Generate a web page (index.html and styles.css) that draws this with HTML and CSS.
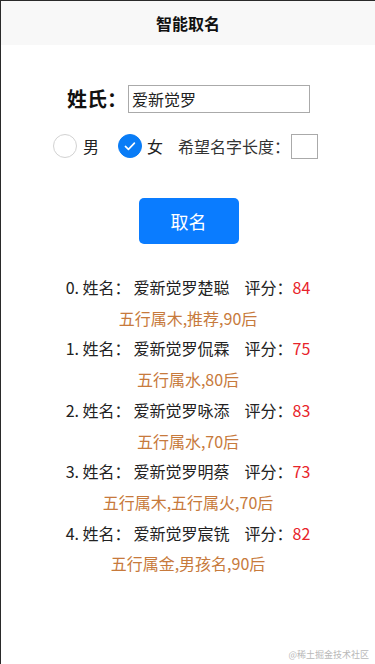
FILE: index.html
```html
<!DOCTYPE html>
<html lang="zh">
<head>
<meta charset="utf-8">
<link rel="stylesheet" href="styles.css">
</head>
<body>
<div class="page">
  <header class="bar">智能取名</header>
  <div class="surname">
    <span class="label">姓氏：</span>
    <div class="input">爱新觉罗</div>
  </div>
  <div class="opts">
    <span class="radio"></span><span class="opt">男</span>
    <span class="radio on"><svg viewBox="0 0 24 24" width="24" height="24"><path d="M7 12.5l3.3 3.2 6.5-6.8" fill="none" stroke="#fff" stroke-width="1.8" stroke-linecap="round" stroke-linejoin="round"/></svg></span><span class="opt">女</span>
    <span class="lenlabel">希望名字长度：</span><span class="lenbox"></span>
  </div>
  <div class="btnwrap"><div class="btn">取名</div></div>
  <div class="results">
    <div class="row"><span>0. 姓名：</span><span class="nm">爱新觉罗楚聪</span><span class="sc">评分：</span><span class="score">84</span></div>
    <div class="desc">五行属木,推荐,90后</div>
    <div class="row"><span>1. 姓名：</span><span class="nm">爱新觉罗侃霖</span><span class="sc">评分：</span><span class="score">75</span></div>
    <div class="desc">五行属水,80后</div>
    <div class="row"><span>2. 姓名：</span><span class="nm">爱新觉罗咏添</span><span class="sc">评分：</span><span class="score">83</span></div>
    <div class="desc">五行属水,70后</div>
    <div class="row"><span>3. 姓名：</span><span class="nm">爱新觉罗明蔡</span><span class="sc">评分：</span><span class="score">73</span></div>
    <div class="desc">五行属木,五行属火,70后</div>
    <div class="row"><span>4. 姓名：</span><span class="nm">爱新觉罗宸铣</span><span class="sc">评分：</span><span class="score">82</span></div>
    <div class="desc">五行属金,男孩名,90后</div>
  </div>
  <div class="wm">@稀土掘金技术社区</div>
</div>
</body>
</html>
```
FILE: styles.css
```css
html, body { margin: 0; padding: 0; }
body {
  font-family: "Noto Sans CJK SC", "Noto Sans", sans-serif;
  color: #222;
  background: #fff;
}
.page {
  width: 375px;
  height: 664px;
  box-sizing: border-box;
  border-left: 1px solid #2a2a2a;
  border-top: 1px solid #2a2a2a;
  position: relative;
  overflow: hidden;
}
.bar {
  height: 44px;
  background: #f8f8f8;
  display: flex;
  align-items: center;
  justify-content: center;
  font-size: 16px;
  font-weight: 700;
  color: #111;
}
.surname {
  display: flex;
  align-items: center;
  margin-top: 39px;
  padding-left: 66px;
}
.label { font-size: 20px; font-weight: 700; color: #111; width: 61px; }
.input {
  width: 177px;
  height: 26px;
  border: 1px solid #aaa;
  font-size: 16px;
  line-height: 26px;
  padding-left: 3px;
  color: #222;
}
.opts {
  display: flex;
  align-items: center;
  margin-top: 20px;
  padding-left: 52px;
  height: 26px;
}
.radio {
  width: 22px;
  height: 22px;
  border: 1px solid #d2d2d2;
  border-radius: 50%;
  display: inline-flex;
  align-items: center;
  justify-content: center;
}
.radio.on { background: #097cf6; border-color: #097cf6; }
.radio svg { width: 22px; height: 22px; }
.opt { font-size: 16px; margin-left: 6px; margin-right: 19px; }
.on + .opt { margin-left: 5px; margin-right: 15px; }
.lenlabel { font-size: 16px; color: #333; }
.lenbox {
  width: 25px;
  height: 23px;
  border: 1px solid #aaa;
  margin-left: 1px;
}
.btnwrap { display: flex; justify-content: center; margin-top: 39px; margin-left: 1px; }
.btn {
  width: 100px;
  height: 46px;
  background: #0a7cff;
  border-radius: 5px;
  color: #fff;
  font-size: 18px;
  display: flex;
  align-items: center;
  justify-content: center;
}
.results { margin-top: 28px; text-align: center; }
.row, .desc { font-size: 16px; line-height: 30.7px; }
.row { color: #222; }
.nm { margin-left: 3px; }
.sc { margin-left: 15px; }
.score { color: #e8232a; margin-left: 0; }
.desc { color: #c77a3c; }
.wm {
  position: absolute;
  right: 6px;
  bottom: 3px;
  font-size: 9px;
  color: #b8b8b8;
}
```
